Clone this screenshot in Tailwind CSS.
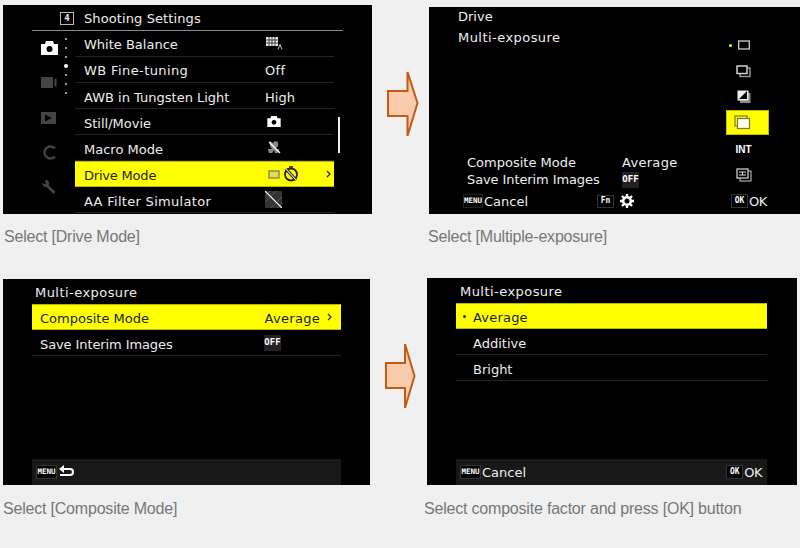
<!DOCTYPE html>
<html lang="en">
<head>
    <meta charset="UTF-8" />
    <title>Multi-exposure</title>
    <script src="https://cdn.jsdelivr.net/npm/@tailwindcss/browser@4"></script>
</head>
<body class="bg-[#f0f0f0] w-[800px] h-[548px] overflow-hidden font-['DejaVu_Sans',sans-serif] text-[13px] text-[#eeeeee]">
    <!-- Top row -->
    <div class="flex items-start h-[279px]">
        <div class="ml-[3px] mt-[5px] w-[369px]">
            <div class="relative w-[369px] h-[209px] bg-black overflow-hidden">
                <div class="flex items-center h-[26px] mx-[29px] pl-[52px] border-b border-[#8a8a8a]">
                    <span class="absolute left-[57px] top-[7px] w-[14px] h-[13px] border border-[#bbbbbb] flex items-center justify-center font-['DejaVu_Sans_Mono',monospace] text-[9px] font-bold">4</span>
                    <span class="tracking-[0.1px] pt-[2px]">Shooting Settings</span>
                </div>
                <div class="flex h-[183px]">
                    <!-- side tabs -->
                    <div class="relative w-[72px] shrink-0">
                        <svg class="absolute left-[38px] top-[10px]" width="17" height="14" viewBox="0 0 17 14"><path fill="#fff" d="M0 3h4l1-3h7l1 3h4v11H0z"/><circle cx="8.5" cy="8" r="3" fill="#000"/></svg>
                        <svg class="absolute left-[38px] top-[46px]" width="16" height="11" viewBox="0 0 16 11"><path fill="#444" d="M0 0h12v11H0zM13.500 2l2-1v9l-2-1z"/></svg>
                        <svg class="absolute left-[38px] top-[81px]" width="15" height="12" viewBox="0 0 15 12"><path fill="#444" fill-rule="evenodd" d="M0 0h15v12H0zM4 2.500v7L11 6z"/></svg>
                        <svg class="absolute left-[39px] top-[114px]" width="15" height="15" viewBox="0 0 15 15"><path fill="none" stroke="#444" stroke-width="2.400" d="M13 3.500A6 6 0 1 0 13 11.500"/></svg>
                        <svg class="absolute left-[39px] top-[149px]" width="14" height="14" viewBox="0 0 14 14"><path fill="none" stroke="#444" stroke-width="2.600" d="M4 4.500L12.500 13"/><path fill="#444" d="M.5 2.500L2.500 4.500 4 3.500 2.500 1 4 0C6 0 7.500 2 7 4.500L5 7C2 7.500 0 5 .5 2.500z"/></svg>
                        <div class="absolute left-[62px] top-[7px] flex flex-col items-center w-[2px]">
                            <i class="mt-0 w-[2px] h-[2px] rounded-full bg-[#cccccc]"></i>
                            <i class="mt-[7px] w-[2px] h-[2px] rounded-full bg-[#cccccc]"></i>
                            <i class="mt-[7px] w-[2px] h-[2px] rounded-full bg-[#cccccc]"></i>
                            <i class="mt-[6px] shrink-0 w-[4px] h-[4px] rounded-full bg-white"></i>
                            <i class="mt-[6px] w-[2px] h-[2px] rounded-full bg-[#cccccc]"></i>
                            <i class="mt-[7px] w-[2px] h-[2px] rounded-full bg-[#cccccc]"></i>
                            <i class="mt-[7px] w-[2px] h-[2px] rounded-full bg-[#cccccc]"></i>
                        </div>
                    </div>
                    <!-- menu rows -->
                    <div class="w-[259px] shrink-0">
                        <div class="flex items-center h-[26px] pl-[9px] pt-[3px] border-b border-[#222222]"><span class="w-[181px]">White Balance</span>
                            <svg class="-mt-[3px] ml-px" width="18" height="13" viewBox="0 0 18 13"><path fill="#eee" d="M0 0h12v9H0z"/><path stroke="#000" stroke-width=".7" d="M3 0v9M6 0v9M9 0v9M0 3h12M0 6h12"/><path fill="none" stroke="#ccc" d="M12 12.500l2-5 2 5"/></svg>
                        </div>
                        <div class="flex items-center h-[26px] pl-[9px] pt-[3px] border-b border-[#222222]"><span class="w-[181px] tracking-[0.4px]">WB Fine-tuning</span><span class="tracking-[0.3px]">Off</span></div>
                        <div class="flex items-center h-[26px] pl-[9px] pt-[4px] border-b border-[#222222]"><span class="w-[181px]">AWB in Tungsten Light</span><span>High</span></div>
                        <div class="flex items-center h-[26px] pl-[9px] pt-[4px] border-b border-[#222222]"><span class="w-[181px]">Still/Movie</span>
                            <svg class="ml-[2px] -mt-[4px]" width="14" height="11" viewBox="0 0 17 14"><path fill="#fff" d="M0 3h4l1-3h7l1 3h4v11H0z"/><circle cx="8.500" cy="8" r="3" fill="#000"/></svg>
                        </div>
                        <div class="flex items-center h-[26px] pl-[9px] pt-[4px] border-b border-[#222222]"><span class="w-[181px]">Macro Mode</span>
                            <svg class="ml-[3px] -mt-[4px]" width="13" height="13" viewBox="0 0 13 13"><path fill="#888" d="M2 0l3 2 2-2 3 1v4L7 8h4l-1 4H7L6 9l-2 3H1L0 8h4L2 5z"/><path stroke="#fff" stroke-width="1.200" d="M1 1l11 11"/></svg>
                        </div>
                        <div class="relative flex items-center h-[26px] pl-[9px] pt-[3px] bg-[#ffff00] text-[#222222] border-y border-[#b8b800]"><span class="w-[181px] tracking-[-0.2px]">Drive Mode</span>
                            <svg class="ml-[3px] -mt-[3px]" width="12" height="9" viewBox="0 0 12 9"><rect x="1" y="1" width="10" height="7" fill="#dddd66" stroke="#888844" stroke-width="1.400"/></svg>
                            <svg class="ml-[3px] -mt-[3px]" width="16" height="16" viewBox="0 0 16 16"><circle cx="8" cy="8.500" r="6" fill="none" stroke="#222" stroke-width="1.800"/><path stroke="#222" stroke-width="3" d="M3 3l10 11"/><path stroke="#eee" stroke-width="1.100" d="M3 3l10 11"/><path stroke="#222" stroke-width="1.500" d="M6 1h4"/></svg>
                            <svg class="absolute right-[3px] top-[8px]" width="5" height="8" viewBox="0 0 5 8"><path fill="none" stroke="#222" stroke-width="1.200" d="M1 1l3 3-3 3"/></svg>
                        </div>
                        <div class="flex items-center h-[26px] pl-[9px] pt-[4px] border-b border-[#222222]"><span class="w-[181px] tracking-[0.3px]">AA Filter Simulator</span>
                            <svg class="-mt-[4px]" width="17" height="17" viewBox="0 0 17 17"><rect width="17" height="17" fill="#333"/><path stroke="#555" d="M0 5l5-5M0 11L11 0M6 17L17 6M12 17l5-5"/><path stroke="#fff" stroke-width="1.200" d="M0 0l17 17"/></svg>
                        </div>
                    </div>
                </div>
                <div class="absolute left-[335px] top-[112px] w-[2px] h-[36px] bg-[#eeeeee]"></div>
            </div>
            <p class="mt-[14px] ml-[1px] h-[18px] leading-[18px] text-base tracking-[-0.2px] font-['Liberation_Sans',sans-serif] text-[#777777]">Select [Drive Mode]</p>
        </div>

        <svg class="ml-[14px] mt-[69px] shrink-0" width="34" height="70" viewBox="0 0 34 70"><path fill="#f9cbad" stroke="#c55a11" stroke-width="2" stroke-linejoin="miter" d="M2 22H21.500V3L31.500 34 21.500 67V47H2z"/></svg>

        <div class="ml-[9px] mt-[7px] w-[371px]">
            <div class="relative w-[371px] h-[207px] bg-black overflow-hidden">
                <div class="pl-[29px] pt-[1px] h-[19px] leading-[18px]">Drive</div>
                <div class="pl-[29px] mt-[3px] h-[18px] leading-[18px] tracking-[0.45px]">Multi-exposure</div>
                <!-- drive icons column -->
                <div class="absolute left-[297px] top-[25px] w-[43px] flex flex-col items-center">
                    <div class="flex items-center justify-center h-[26px] pr-[8px]"><svg width="12" height="10" viewBox="0 0 12 10"><rect x=".7" y="1" width="10.600" height="8" fill="none" stroke="#ddd" stroke-width="1.200"/></svg></div>
                    <div class="flex items-center justify-center h-[26px] pr-[8px]"><svg width="15" height="13" viewBox="0 0 15 13"><rect x="4" y="3" width="10" height="8.500" fill="none" stroke="#999" stroke-width="1.400"/><rect x="1" y="1" width="10" height="7.500" fill="#000" stroke="#ddd" stroke-width="1.400"/></svg></div>
                    <div class="flex items-center justify-center h-[26px] pr-[8px] pb-[1px]"><svg width="14" height="13" viewBox="0 0 14 13"><path fill="#888" d="M3 3h10.500v10H3z"/><path fill="#eee" d="M.5.500h11v10H.5z"/><path fill="#000" d="M2 9l8-8v8z"/></svg></div>
                    <div class="flex items-center justify-center h-[25px] w-[43px] bg-[#ffff00] border border-[#c0c000]"><svg class="-ml-[10px]" width="17" height="15" viewBox="0 0 17 15"><rect x="1" y="1" width="12" height="10" fill="none" stroke="#777744" stroke-width="1.200"/><rect x="3.500" y="3.500" width="12" height="10" fill="#ffffee" stroke="#777744" stroke-width="1.200"/></svg></div>
                    <div class="flex items-center justify-center h-[26px] mt-[1px] pr-[8px] text-[10px] font-bold font-['Liberation_Sans',sans-serif] text-white">INT</div>
                    <div class="flex items-center justify-center h-[26px] pr-[8px]"><svg width="16" height="14" viewBox="0 0 16 14"><rect x="4" y="3" width="11" height="10" fill="none" stroke="#aaa" stroke-width="1.200"/><rect x="1" y="1" width="11" height="9" fill="#000" stroke="#ddd" stroke-width="1.200"/><path stroke="#ddd" d="M3 4h7M3 7h7M6.500 4v3"/></svg></div>
                </div>
                <i class="absolute left-[300px] top-[37px] w-[3px] h-[3px] rounded-full bg-[#ffff00]"></i>
                <!-- composite info -->
                <div class="absolute left-[38px] top-[147px] flex h-[17px] items-center"><span class="w-[155px]">Composite Mode</span><span class="tracking-[0.3px]">Average</span></div>
                <div class="absolute left-[38px] top-[164px] flex h-[17px] items-center"><span class="w-[155px] tracking-[-0.1px]">Save Interim Images</span><span class="w-[17px] h-[16px] bg-[#222222] flex items-center justify-center font-['DejaVu_Sans_Mono',monospace] font-bold text-[9px] text-white">OFF</span></div>
                <!-- bottom guide -->
                <div class="absolute left-[34px] top-[187px] h-[14px] flex items-center">
                    <span class="w-[20px] h-[14px] border border-[#222222] flex items-center justify-center font-['DejaVu_Sans_Mono',monospace] font-bold text-[7.5px] text-white">MENU</span>
                    <span class="ml-[1px] w-[113px] pt-[2px]">Cancel</span>
                    <span class="w-[17px] h-[13px] border border-[#333333] flex items-center justify-center font-['DejaVu_Sans_Mono',monospace] font-bold text-[8px] text-white">Fn</span>
                    <svg class="ml-[6px]" width="14" height="14" viewBox="0 0 14 14"><circle cx="7" cy="7" r="3.800" fill="none" stroke="#fff" stroke-width="2.600"/><path stroke="#fff" stroke-width="2.400" d="M7 0v3M7 11v3M0 7h3M11 7h3M2 2l2 2M10 10l2 2M2 12l2-2M10 4l2-2"/></svg>
                    <span class="ml-[97px] w-[17px] h-[14px] border border-[#333333] flex items-center justify-center font-['DejaVu_Sans_Mono',monospace] font-bold text-[8px] text-white">OK</span>
                    <span class="ml-[1px] text-[13px] tracking-[-0.5px] pt-[1px]">OK</span>
                </div>
            </div>
            <p class="mt-[14px] -ml-[1px] h-[18px] leading-[18px] text-base tracking-[-0.2px] font-['Liberation_Sans',sans-serif] text-[#777777]">Select [Multiple-exposure]</p>
        </div>
    </div>

    <!-- Bottom row -->
    <div class="flex items-start">
        <div class="ml-[3px] w-[367px]">
            <div class="relative w-[367px] h-[206px] bg-black overflow-hidden">
                <div class="pl-[32px] h-[25px] flex items-center pt-[2px] tracking-[0.45px]">Multi-exposure</div>
                <div class="mx-[29px] flex items-center justify-between h-[26px] pl-[8px] pr-[9px] pt-[3px] bg-[#ffff00] text-[#222222] border-y border-[#b8b800]">
                    <span>Composite Mode</span>
                    <span class="flex items-center gap-[7px] tracking-[0.3px]">Average <svg class="-mt-[3px]" width="5" height="8" viewBox="0 0 5 8"><path fill="none" stroke="#222" stroke-width="1.200" d="M1 1l3 3-3 3"/></svg></span>
                </div>
                <div class="mx-[29px] flex items-center h-[26px] pl-[8px] pt-[4px] border-b border-[#222222]"><span class="w-[224px] tracking-[-0.1px]">Save Interim Images</span><span class="-mt-[4px] w-[17px] h-[16px] bg-[#222222] flex items-center justify-center font-['DejaVu_Sans_Mono',monospace] font-bold text-[9px] text-white">OFF</span></div>
                <div class="absolute left-[29px] right-[29px] bottom-0 h-[26px] bg-[#181818] flex items-center pl-[4px] pb-[1px]">
                    <span class="w-[21px] h-[14px] bg-black border border-[#333333] flex items-center justify-center font-['DejaVu_Sans_Mono',monospace] font-bold text-[7.5px] text-white">MENU</span>
                    <svg class="ml-[2px]" width="16" height="13" viewBox="0 0 16 13"><path fill="#fff" d="M0 4l5-4v3h6a4 4 0 0 1 0 8H1V9h10a2 2 0 0 0 0-4H5v3z"/></svg>
                </div>
            </div>
            <p class="mt-[15px] h-[18px] leading-[18px] text-base tracking-[-0.2px] font-['Liberation_Sans',sans-serif] text-[#777777]">Select [Composite Mode]</p>
        </div>

        <svg class="ml-[14px] mt-[62px] shrink-0" width="32" height="70" viewBox="0 0 32 70"><path fill="#f9cbad" stroke="#c55a11" stroke-width="2" stroke-linejoin="miter" d="M2 22H21V3L30.500 35 21 67V47H2z"/></svg>

        <div class="ml-[11px] -mt-[1px] w-[370px]">
            <div class="relative w-[370px] h-[207px] bg-black overflow-hidden">
                <div class="pl-[33px] h-[25px] flex items-center pt-[2px] tracking-[0.45px]">Multi-exposure</div>
                <div class="relative ml-[29px] mr-[30px] flex items-center h-[26px] pl-[17px] pt-[3px] bg-[#ffff00] text-[#222222] border-y border-[#b8b800] tracking-[0.2px]">
                    <i class="absolute left-[7px] top-[11px] w-[3px] h-[3px] rounded-full bg-[#222222]"></i>Average
                </div>
                <div class="ml-[29px] mr-[30px] flex items-center h-[26px] pl-[17px] pt-[4px] border-b border-[#222222]">Additive</div>
                <div class="ml-[29px] mr-[30px] flex items-center h-[26px] pl-[17px] pt-[4px] border-b border-[#222222]">Bright</div>
                <div class="absolute left-[29px] right-[30px] bottom-0 h-[26px] bg-[#181818] flex items-center justify-between pl-[4px] pr-[5px]">
                    <span class="flex items-center">
                        <span class="w-[21px] h-[14px] bg-black border border-[#333333] flex items-center justify-center font-['DejaVu_Sans_Mono',monospace] font-bold text-[7.5px] text-white">MENU</span>
                        <span class="ml-[1px] pt-[2px]">Cancel</span>
                    </span>
                    <span class="flex items-center">
                        <span class="w-[17px] h-[14px] bg-black border border-[#333333] flex items-center justify-center font-['DejaVu_Sans_Mono',monospace] font-bold text-[8px] text-white">OK</span>
                        <span class="ml-[1px] text-[13px] tracking-[-0.5px] pt-[1px]">OK</span>
                    </span>
                </div>
            </div>
            <p class="mt-[15px] -ml-[3px] h-[18px] leading-[18px] text-base tracking-[-0.2px] font-['Liberation_Sans',sans-serif] text-[#777777]">Select composite factor and press [OK] button</p>
        </div>
    </div>
</body>
</html>
